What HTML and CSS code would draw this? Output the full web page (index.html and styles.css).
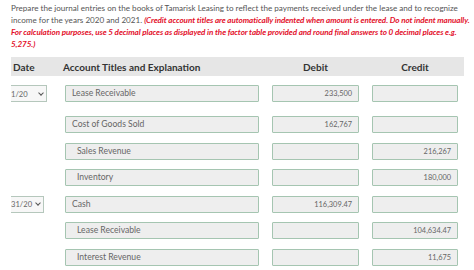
FILE: index.html
```html
<!DOCTYPE html>
<html lang="en">
<head>
  <meta charset="UTF-8">
  <meta name="viewport" content="width=device-width, initial-scale=1.0">
  <title>Journal Entries</title>
  <link rel="stylesheet" href="styles.css">
</head>
<body>
  <p class="prompt">
    Prepare the journal entries on the books of Tamarisk Leasing to reflect the payments received under the lease and to recognize<br>
    income for the years 2020 and 2021.
    <span class="note">(Credit account titles are automatically indented when amount is entered. Do not indent manually.<br>
    For calculation purposes, use 5 decimal places as displayed in the factor table provided and round final answers to 0 decimal places e.g.<br>
    5,275.)</span>
  </p>

  <div class="journal">
    <div class="journal-head">
      <div class="col-date">Date</div>
      <div class="col-account">Account Titles and Explanation</div>
      <div class="col-amount">Debit</div>
      <div class="col-amount">Credit</div>
    </div>

    <!-- first entry -->
    <div class="journal-row first">
      <div class="date-cell"><div class="date-select">1/20<span class="chev"></span></div></div>
      <div class="field">Lease Receivable</div>
      <div class="field num">233,500</div>
      <div class="field num"></div>
    </div>
    <div class="journal-row">
      <div class="date-cell"></div>
      <div class="field">Cost of Goods Sold</div>
      <div class="field num">162,767</div>
      <div class="field num"></div>
    </div>
    <div class="journal-row">
      <div class="date-cell"></div>
      <div class="field credit">Sales Revenue</div>
      <div class="field num"></div>
      <div class="field num">216,267</div>
    </div>
    <div class="journal-row">
      <div class="date-cell"></div>
      <div class="field credit">Inventory</div>
      <div class="field num"></div>
      <div class="field num">180,000</div>
    </div>

    <!-- second entry -->
    <div class="journal-row">
      <div class="date-cell"><div class="date-select short">31/20<span class="chev"></span></div></div>
      <div class="field">Cash</div>
      <div class="field num">116,309.47</div>
      <div class="field num"></div>
    </div>
    <div class="journal-row">
      <div class="date-cell"></div>
      <div class="field credit">Lease Receivable</div>
      <div class="field num"></div>
      <div class="field num">104,634.47</div>
    </div>
    <div class="journal-row">
      <div class="date-cell"></div>
      <div class="field credit">Interest Revenue</div>
      <div class="field num"></div>
      <div class="field num">11,675</div>
    </div>
  </div>
</body>
</html>
```

FILE: styles.css
```css
body {
  font-family: Lato, "Open Sans", sans-serif;
  background-color: #ffffff;
  margin: 0;
  padding: 0;
}

.prompt {
  margin: 0;
  padding: 2px 0 0 11px;
  font-size: 8.1px;
  line-height: 12px;
  color: #555555;
  white-space: nowrap;
}

.prompt .note {
  color: #e3102b;
  font-weight: bold;
  font-style: italic;
  letter-spacing: -0.08px;
}

.journal {
  margin: 7px 0 0 11px;
  width: 453px;
}

.journal-head,
.journal-row {
  display: grid;
  grid-template-columns: 41px 194px 87px 86px;
  column-gap: 13px;
}

.journal-head {
  height: 19px;
  align-items: center;
  background-color: #e6e6e6;
  font-size: 10px;
  font-weight: bold;
  color: #333333;
  margin-bottom: 9px;
}

.journal-head .col-date {
  padding-left: 2px;
}

.journal-head .col-account {
  margin-left: -2px;
}

.journal-head .col-amount {
  text-align: center;
}

.journal-row {
  height: 17px;
  margin-bottom: 9.6px;
}

.journal-row.first {
  margin-bottom: 14px;
}

.date-cell {
  overflow: hidden;
}

/* left part of the date dropdown is scrolled out of view */
.date-select {
  display: flex;
  align-items: center;
  justify-content: space-between;
  box-sizing: border-box;
  width: 36px;
  height: 17px;
  padding-right: 3px;
  border: 1px solid #b5c7bc;
  border-left: none;
  background-color: #f7f7f7;
  font-size: 7.6px;
  color: #666666;
}

.date-select.short {
  width: 33px;
}

.chev {
  width: 3px;
  height: 3px;
  border-right: 1.2px solid #555;
  border-bottom: 1.2px solid #555;
  transform: rotate(45deg);
  margin-top: -2px;
}

.field {
  box-sizing: border-box;
  height: 17px;
  line-height: 15px;
  padding: 0 6px;
  border: 1px solid #a5c5b1;
  border-radius: 1px;
  background-color: #eeeeee;
  font-size: 8.6px;
  color: #666666;
  white-space: nowrap;
  overflow: hidden;
}

.field.credit {
  padding-left: 11px;
}

.field.num {
  text-align: right;
  font-size: 7.4px;
}
```
